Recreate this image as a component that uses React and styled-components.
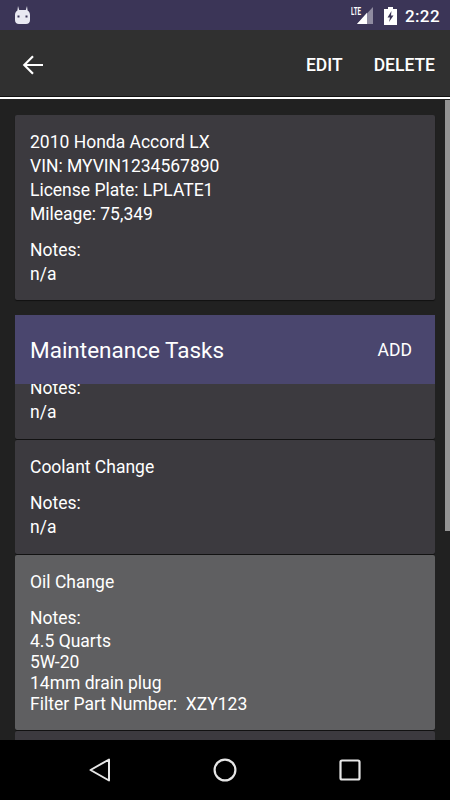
import React from "react";
import styled, {createGlobalStyle} from "styled-components";

const GlobalStyle = createGlobalStyle`
  html, body {
    margin: 0;
    padding: 0;
    background: #000;
  }
  * {
    box-sizing: border-box;
  }
`;

const Screen = styled.div`
  width: 450px;
  height: 800px;
  display: flex;
  flex-direction: column;
  overflow: hidden;
  font-family: Roboto, "Liberation Sans", sans-serif;
  color: #fff;
`;

const StatusBar = styled.div`
  height: 30px;
  flex: none;
  display: flex;
  align-items: center;
  justify-content: space-between;
  padding: 0 10px 0 15px;
  background: #3b3557;
`;

const StatusRight = styled.div`
  display: flex;
  align-items: center;
  padding-top: 1px;
`;

const Clock = styled.span`
  margin-left: 8px;
  font-size: 17px;
  font-weight: 500;
  letter-spacing: 0.4px;
`;

const BatteryWrap = styled.span`
  display: flex;
  margin-left: 11px;
`;

const Toolbar = styled.div`
  height: 66px;
  flex: none;
  display: flex;
  align-items: center;
  padding: 4px 15px 0 22px;
  background: #303030;
`;

const Actions = styled.div`
  margin-left: auto;
  display: flex;
  gap: 31px;
`;

const Action = styled.span`
  font-size: 17.5px;
  font-weight: 500;
`;

const Divider = styled.div`
  height: 4px;
  flex: none;
  background: #fff;
  border-top: 1px solid #111;
  border-bottom: 1px solid #222;
`;

const Content = styled.div`
  flex: 1;
  min-height: 0;
  position: relative;
  display: flex;
  flex-direction: column;
  gap: 15px;
  padding: 15px 15px 0;
  overflow: hidden;
  background: #212121;
`;

const ScrollThumb = styled.div`
  position: absolute;
  top: 0;
  right: 0;
  width: 5px;
  height: 431px;
  background: #949494;
`;

const Card = styled.div`
  flex: none;
  padding: 15px 15px 14px;
  border-radius: 2px;
  background: #3c3a3f;
  box-shadow: 0 1px 1px rgba(0, 0, 0, 0.5);
  font-size: 17.5px;
  line-height: 24px;
`;

const Line = styled.div`
  white-space: pre;
  line-height: ${props => props.$tight ? "21px" : "24px"};
  margin-top: ${props => props.$gap || 0}px;
`;

const Section = styled.div`
  flex: 1;
  min-height: 0;
  display: flex;
  flex-direction: column;
`;

const SectionHeader = styled.div`
  height: 69px;
  flex: none;
  display: flex;
  align-items: center;
  justify-content: space-between;
  padding: 0 23px 0 15px;
  background: #4a466e;
`;

const SectionTitle = styled.span`
  font-size: 22.5px;
`;

const AddButton = styled.span`
  font-size: 17.5px;
`;

const TaskList = styled.div`
  flex: 1;
  min-height: 0;
  overflow: hidden;
`;

const TaskScroll = styled.div`
  display: flex;
  flex-direction: column;
  gap: 1px;
  margin-top: -8px;
`;

const TaskCard = styled(Card)`
  padding: ${props => props.$cut ? "0 15px 15px" : "15px"};
  background: ${props => props.$selected ? "#5f5f61" : "#3c3a3f"};
  min-height: ${props => props.$peek ? "40px" : "0"};
`;

const NavBar = styled.div`
  height: 60px;
  flex: none;
  display: flex;
  align-items: center;
  justify-content: center;
  gap: 102px;
  background: #000;
`;

const AndroidIcon = () => (
    <svg width="15" height="18" viewBox="0 0 15 18" fill="#e9e9f2">
        <path d="M3 0l1.200 4h6.600L12 0l.6 4.600C14 5.500 15 7 15 9v5c0 2.500-1.500 4-4 4H4c-2.500 0-4-1.500-4-4V9c0-2 1-3.500 2.400-4.400z" />
        <rect x="2.500" y="9.500" width="2" height="2" fill="#3b3557" />
        <rect x="10.500" y="9.500" width="2" height="2" fill="#3b3557" />
    </svg>
);

const SignalIcon = () => (
    <svg width="22" height="18" viewBox="0 0 22 18">
        <path d="M22 0v17H6z" fill="#8f8ba0" />
        <path d="M16 5.700V17H6z" fill="#fff" />
        <text x="0" y="7.500" fontFamily="Roboto, sans-serif" fontSize="10" fontWeight="700" fill="#fff" textLength="10" lengthAdjust="spacingAndGlyphs">LTE</text>
    </svg>
);

const BatteryIcon = () => (
    <svg width="13" height="18" viewBox="0 0 13 18">
        <path d="M4 0h5v2h4v16H0V2h4z" fill="#fff" />
        <path d="M7.500 4L3.500 10.500H6L5 15l4.500-6.500H7z" fill="#3b3557" />
    </svg>
);

const BackIcon = () => (
    <svg width="22" height="22" viewBox="0 0 22 22" fill="none" stroke="#fff" strokeWidth="2.200">
        <path d="M21 11H2.500M11 2.300L2.300 11l8.700 8.700" />
    </svg>
);

const NavBack = () => (
    <svg width="22" height="24" viewBox="0 0 22 24" fill="none" stroke="#e6e6e6" strokeWidth="2" strokeLinejoin="round">
        <path d="M20 1.500v21L1.500 12z" />
    </svg>
);

const NavHome = () => (
    <svg width="24" height="24" viewBox="0 0 24 24" fill="none" stroke="#e6e6e6" strokeWidth="2.200">
        <circle cx="12" cy="12" r="10.400" />
    </svg>
);

const NavRecent = () => (
    <svg width="22" height="22" viewBox="0 0 22 22" fill="none" stroke="#e6e6e6" strokeWidth="2.200" strokeLinejoin="round">
        <rect x="1.500" y="1.500" width="19" height="19" rx="1.500" />
    </svg>
);

const App = () => (
    <Screen>
        <GlobalStyle />
        <StatusBar>
            <AndroidIcon />
            <StatusRight>
                <SignalIcon />
                <BatteryWrap>
                    <BatteryIcon />
                </BatteryWrap>
                <Clock>2:22</Clock>
            </StatusRight>
        </StatusBar>
        <Toolbar>
            <BackIcon />
            <Actions>
                <Action>EDIT</Action>
                <Action>DELETE</Action>
            </Actions>
        </Toolbar>
        <Divider />
        <Content>
            <ScrollThumb />
            <Card>
                <Line>2010 Honda Accord LX</Line>
                <Line>VIN: MYVIN1234567890</Line>
                <Line>License Plate: LPLATE1</Line>
                <Line>Mileage: 75,349</Line>
                <Line $gap={12}>Notes:</Line>
                <Line>n/a</Line>
            </Card>
            <Section>
                <SectionHeader>
                    <SectionTitle>Maintenance Tasks</SectionTitle>
                    <AddButton>ADD</AddButton>
                </SectionHeader>
                <TaskList>
                    <TaskScroll>
                        <TaskCard $cut>
                            <Line>Notes:</Line>
                            <Line>n/a</Line>
                        </TaskCard>
                        <TaskCard>
                            <Line>Coolant Change</Line>
                            <Line $gap={12}>Notes:</Line>
                            <Line>n/a</Line>
                        </TaskCard>
                        <TaskCard $selected>
                            <Line>Oil Change</Line>
                            <Line $gap={12}>Notes:</Line>
                            <Line $gap={1} $tight>4.5 Quarts</Line>
                            <Line $tight>5W-20</Line>
                            <Line $tight>14mm drain plug</Line>
                            <Line $tight>Filter Part Number:  XZY123</Line>
                        </TaskCard>
                        <TaskCard $peek />
                    </TaskScroll>
                </TaskList>
            </Section>
        </Content>
        <NavBar>
            <NavBack />
            <NavHome />
            <NavRecent />
        </NavBar>
    </Screen>
);

export default App;
